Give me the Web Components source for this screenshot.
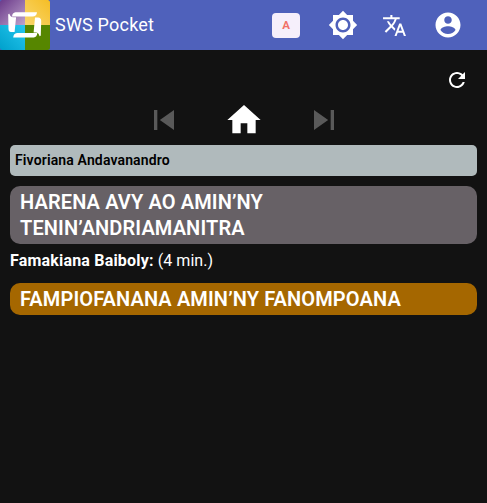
<!DOCTYPE html>
<html lang="mg">
<head>
<meta charset="utf-8">
<title>SWS Pocket</title>
<style>
body{margin:0;background:#121212;color:#fff;font-family:Roboto,sans-serif;height:503px;overflow:hidden}
</style>
</head>
<body>
<sws-app></sws-app>
<script>
const paths={
 sun:'M20 8.69V4h-4.69L12 .69 8.69 4H4v4.69L.69 12 4 15.31V20h4.69L12 23.31 15.31 20H20v-4.69L23.31 12 20 8.69zM12 18c-3.31 0-6-2.69-6-6s2.69-6 6-6 6 2.69 6 6-2.69 6-6 6zm0-10c-2.21 0-4 1.79-4 4s1.79 4 4 4 4-1.79 4-4-1.79-4-4-4z',
 translate:'M12.87 15.07l-2.54-2.51.03-.03c1.74-1.94 2.98-4.17 3.71-6.53H17V4h-7V2H8v2H1v1.99h11.17C11.5 7.92 10.44 9.75 9 11.35 8.07 10.32 7.3 9.19 6.69 8h-2c.73 1.63 1.73 3.17 2.98 4.56l-5.09 5.02L4 19l5-5 3.11 3.11.76-2.04zM18.5 10h-2L12 22h2l1.12-3h4.75L21 22h2l-4.5-12zm-2.62 7l1.62-4.33L19.12 17h-3.24z',
 account:'M12 2C6.48 2 2 6.48 2 12s4.48 10 10 10 10-4.48 10-10S17.52 2 12 2zm0 3c1.66 0 3 1.34 3 3s-1.34 3-3 3-3-1.34-3-3 1.34-3 3-3zm0 14.2c-2.5 0-4.71-1.28-6-3.22.03-1.99 4-3.08 6-3.08 1.99 0 5.97 1.09 6 3.08-1.29 1.94-3.5 3.22-6 3.22z',
 refresh:'M17.65 6.35C16.2 4.9 14.21 4 12 4c-4.42 0-7.99 3.58-7.99 8s3.57 8 7.99 8c3.73 0 6.84-2.55 7.73-6h-2.08c-.82 2.33-3.04 4-5.65 4-3.31 0-6-2.69-6-6s2.69-6 6-6c1.66 0 3.14.69 4.22 1.78L13 11h7V4l-2.35 2.35z',
 previous:'M6 6h2v12H6zm3.5 6l8.5 6V6z',
 home:'M10 20v-6h4v6h5v-8h3L12 3 2 12h3v8z',
 next:'M6 18l8.5-6L6 6v12zM16 6v12h2V6h-2z'
};
function define(name,html){
 customElements.define(name,class extends HTMLElement{
  constructor(){super();this.attachShadow({mode:'open'}).innerHTML=html}
 });
}
customElements.define('sws-icon',class extends HTMLElement{
 connectedCallback(){
  if(this.shadowRoot)return;
  const s=this.getAttribute('size')||24;
  this.attachShadow({mode:'open'}).innerHTML=`<style>:host{display:block;flex:none}svg{display:block}</style><svg width="${s}" height="${s}" viewBox="0 0 24 24" fill="currentColor"><path fill-rule="${this.getAttribute('name')==='sun'?'evenodd':'nonzero'}" d="${paths[this.getAttribute('name')]}"/></svg>`;
 }
});
define('sws-logo',`<style>:host{display:block;flex:none;width:50px;height:50px}svg{display:block}</style>
<svg width="50" height="50" viewBox="0 0 50 50"><defs>
<linearGradient id="p" x1="0" y1="0" x2="1" y2="1"><stop stop-color="#6b3a8a"/><stop offset="1" stop-color="#bea3cc"/></linearGradient>
<linearGradient id="y" x1="0" y1="1" x2="1" y2="0"><stop stop-color="#f9d66c"/><stop offset="1" stop-color="#f5bd25"/></linearGradient>
<linearGradient id="c" x1="0" y1="1" x2="1" y2="0"><stop stop-color="#00a0cb"/><stop offset="1" stop-color="#25c7ee"/></linearGradient>
<clipPath id="r"><rect width="50" height="50" rx="2.5"/></clipPath></defs>
<g clip-path="url(#r)"><path fill="url(#p)" d="M0 0h25v25H0z"/><path fill="url(#y)" d="M25 0h25v25H25z"/><path fill="url(#c)" d="M0 25h25v25H0z"/><path fill="#568600" d="M25 25h25v25H25z"/></g>
<path fill="#fff" d="M15.5 12.2H37q-.5 4.4-4.5 4.4H12q.3-4 3.5-4.4zM8.2 14.8q0-1 1.2-1 .8 3.3 3.8 3.5h2.9L14.6 32H11q-2.5-.2-2.5-3zM35 17.5h3q3.2.2 3.2 3.5l-.4 14q0 1.2-1.2 1.2-.8-3.4-3.8-3.7h-2.2zM17 33.1h20.3q-.3 4-3.5 4.5H13.2q.3-4.2 3.8-4.5z"/></svg>`);
define('sws-header',`<style>
:host{display:flex;align-items:center;height:50px;background:#4f61bb;box-sizing:border-box;padding-right:24px}
.title{font-size:18px;line-height:24px;margin-left:5px;flex:1;letter-spacing:.2px}
.a{width:28px;height:25px;border-radius:4px;background:#f6effb;color:#f17168;font:700 11.5px/25px Roboto,sans-serif;text-align:center;margin:1px 28px 0 0}
.tr{margin:1px 26px 0 24px}
</style><sws-logo></sws-logo><div class="title">SWS Pocket</div><div class="a">A</div><sws-icon name="sun" size="30"></sws-icon><sws-icon class="tr" name="translate" size="25"></sws-icon><sws-icon name="account" size="30"></sws-icon>`);
define('sws-nav',`<style>
:host{display:block}.top{display:flex;justify-content:flex-end;padding:18px 18px 8px}
nav{display:flex;justify-content:center;gap:40px}.off{color:#595959}
</style><div class="top"><sws-icon name="refresh"></sws-icon></div><nav><sws-icon class="off" name="previous" size="40"></sws-icon><sws-icon name="home" size="40"></sws-icon><sws-icon class="off" name="next" size="40"></sws-icon></nav>`);
define('sws-banner',`<style>
:host{display:block;box-sizing:border-box;background:#b0babc;color:#000;border-radius:5px;padding:5px;height:31px;font-size:14px;line-height:21px;font-weight:600;letter-spacing:.14px}
</style><slot></slot>`);
define('sws-section',`<style>
:host{display:block;background:var(--section-color);border-radius:10px;padding:3px 10px;font-size:20px;line-height:26px;font-weight:600;letter-spacing:.12px}
</style><slot></slot>`);
define('sws-part',`<style>
:host{display:block;font-size:16px;line-height:24px;letter-spacing:.07px}b{font-weight:700;letter-spacing:.19px}
</style><b><slot name="title"></slot></b> <slot></slot>`);
define('sws-app',`<style>
:host{display:block}main{padding:5px 10px}
.one{--section-color:#676166;margin-top:10px}
sws-part{margin:5px 0 10px}
.two{--section-color:#a56700}
</style><sws-header></sws-header><sws-nav></sws-nav><main>
<sws-banner>Fivoriana Andavanandro</sws-banner>
<sws-section class="one">HARENA AVY AO AMIN’NY<br>TENIN’ANDRIAMANITRA</sws-section>
<sws-part><span slot="title">Famakiana Baiboly:</span>(4 min.)</sws-part>
<sws-section class="two">FAMPIOFANANA AMIN’NY FANOMPOANA</sws-section></main>`);
</script>
</body>
</html>
